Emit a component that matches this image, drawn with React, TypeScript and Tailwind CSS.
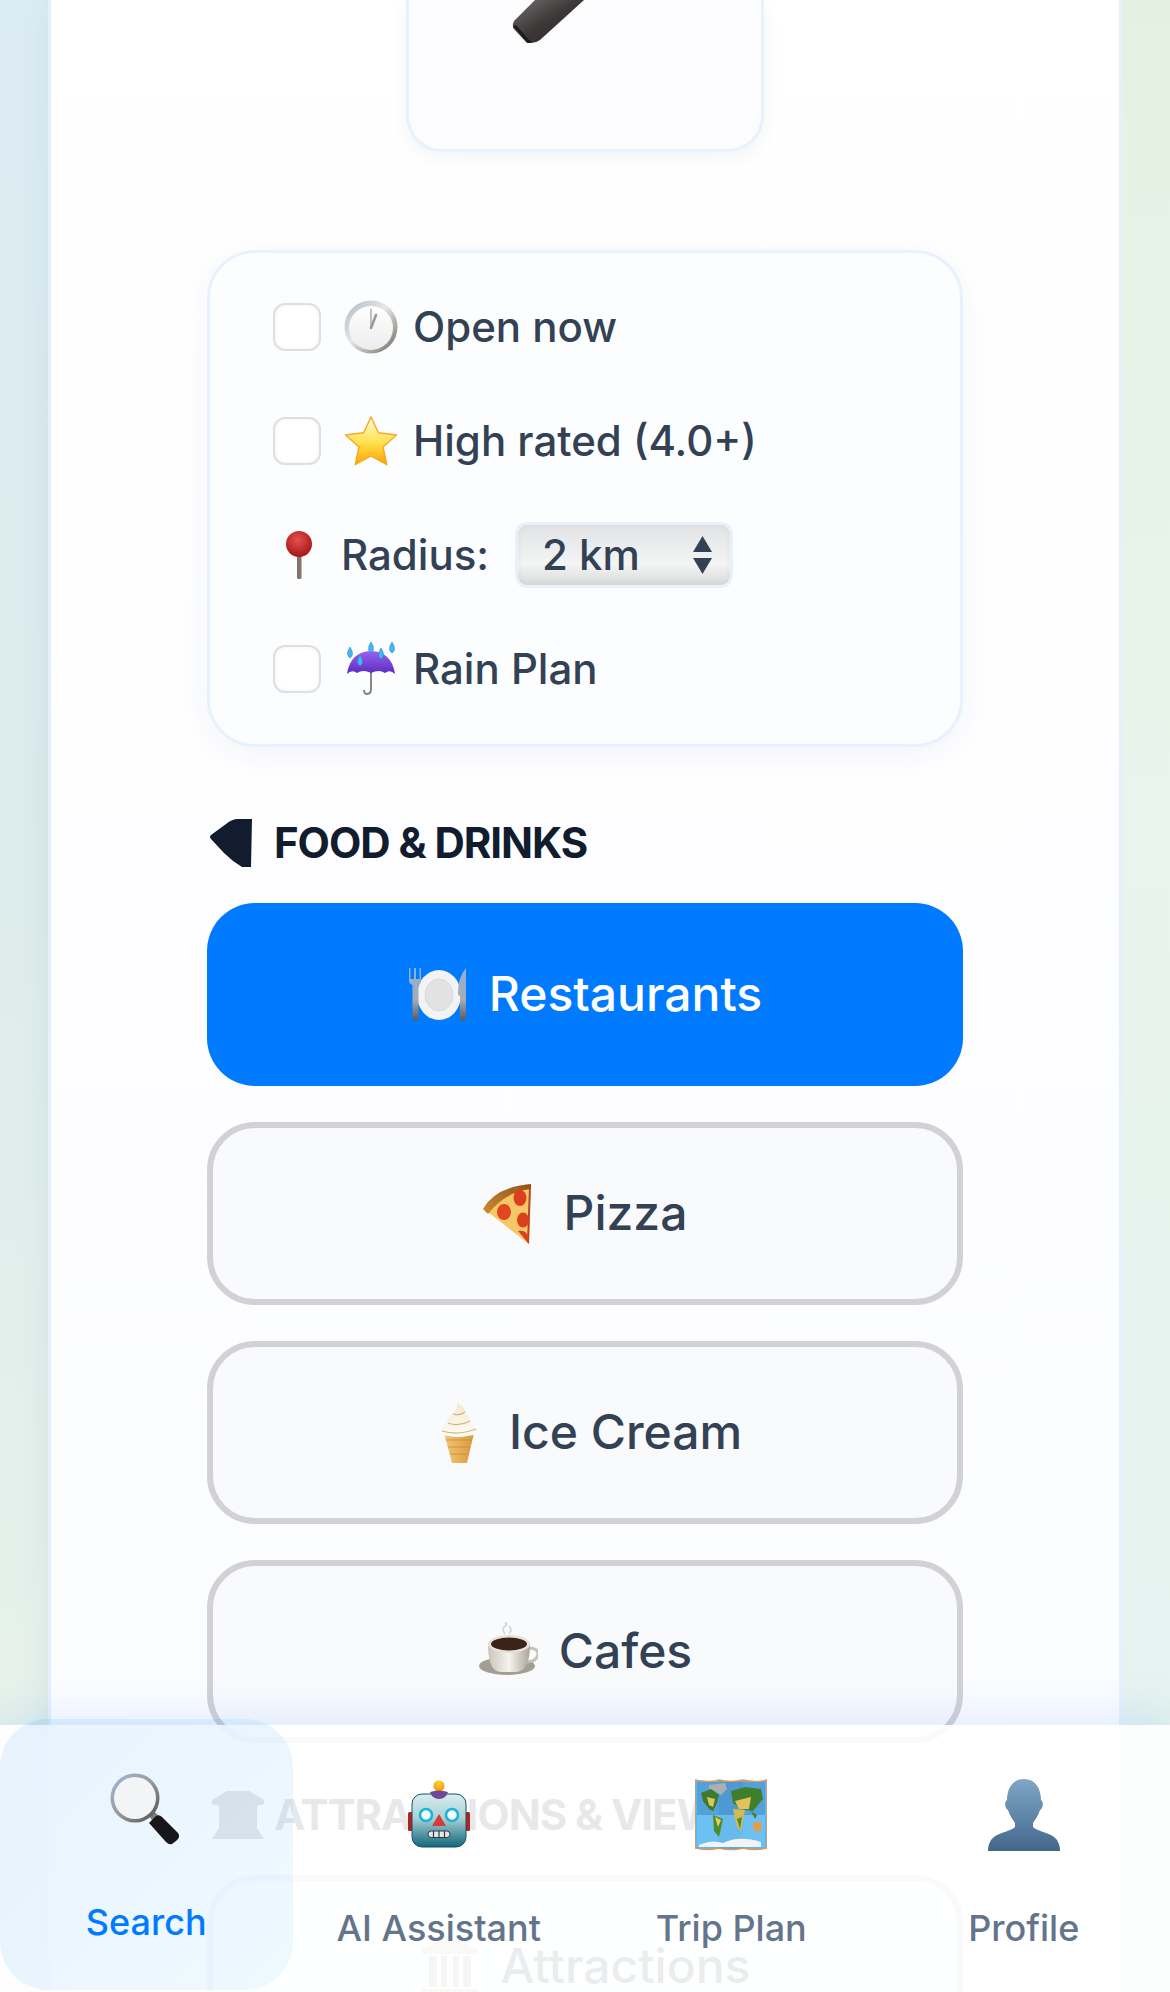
import type { ReactNode } from "react";

const ClockEmoji = () => (
  <svg viewBox="0 0 54 54" className="w-[54px] h-[54px] shrink-0">
    <defs>
      <linearGradient id="clockRing" x1="0" y1="0" x2="1" y2="1">
        <stop offset="0" stopColor="#a9b7c6" />
        <stop offset="0.45" stopColor="#e8e8e8" />
        <stop offset="0.7" stopColor="#b0aca6" />
        <stop offset="1" stopColor="#66625c" />
      </linearGradient>
      <linearGradient id="clockFace" x1="0" y1="0" x2="0" y2="1">
        <stop offset="0" stopColor="#ffffff" />
        <stop offset="1" stopColor="#ececec" />
      </linearGradient>
    </defs>
    <circle cx="27" cy="27" r="26.5" fill="url(#clockRing)" />
    <circle cx="27" cy="28" r="22" fill="url(#clockFace)" />
    <path d="M27 27V9" stroke="#9a9a9a" strokeWidth="1.2" strokeLinecap="round" />
    <path d="M27 28L32 15" stroke="#9a9a9a" strokeWidth="2.6" strokeLinecap="round" />
  </svg>
);

const StarEmoji = () => (
  <svg viewBox="0 0 54 54" className="w-[54px] h-[54px] shrink-0">
    <defs>
      <linearGradient id="starFill" x1="0" y1="0" x2="0" y2="1">
        <stop offset="0" stopColor="#fffbd8" />
        <stop offset="0.55" stopColor="#ffe04a" />
        <stop offset="1" stopColor="#ffa300" />
      </linearGradient>
    </defs>
    <path
      d="M27 3L34.4 18.8L52.5 21L39 33L42.8 50.6L27 42L11.2 50.6L15 33L1.5 21L19.6 18.8Z"
      fill="url(#starFill)"
      stroke="#f7a823"
      strokeWidth="1.4"
      strokeLinejoin="round"
    />
  </svg>
);

const PinEmoji = () => (
  <svg viewBox="0 0 28 48" className="w-[28px] h-[48px] shrink-0">
    <defs>
      <radialGradient id="pinHead" cx="0.45" cy="0.35" r="0.7">
        <stop offset="0" stopColor="#e84f4f" />
        <stop offset="1" stopColor="#9f1212" />
      </radialGradient>
    </defs>
    <rect x="12" y="22" width="4.5" height="26" rx="1.5" fill="#85746c" />
    <circle cx="14" cy="13" r="13" fill="url(#pinHead)" />
  </svg>
);

const UmbrellaEmoji = () => (
  <svg viewBox="0 0 54 54" className="w-[54px] h-[54px] shrink-0">
    <defs>
      <linearGradient id="umbrellaTop" x1="0" y1="0" x2="0" y2="1">
        <stop offset="0" stopColor="#9a62ee" />
        <stop offset="1" stopColor="#5a2bc0" />
      </linearGradient>
    </defs>
    <path d="M27 28V47Q27 52 23 52Q20 52 20 48" fill="none" stroke="#7c7c7c" strokeWidth="1.8" />
    <path d="M3 32Q6 10 27 9Q48 10 51 32Q46 27 41 31Q35 27 27 31Q19 27 13 31Q8 27 3 32Z" fill="url(#umbrellaTop)" />
    <path
      d="M6 5Q11 13 6 16Q1 13 6 5ZM27 0Q32 8 27 11Q22 8 27 0ZM48 0Q53 8 48 11Q43 8 48 0ZM37 6Q42 14 37 17Q32 14 37 6ZM16 13Q21 21 16 24Q11 21 16 13Z"
      fill="#45b6f2"
      stroke="#1f8fd0"
      strokeWidth="0.6"
    />
  </svg>
);

const PlateEmoji = () => (
  <svg viewBox="0 0 60 60" className="w-[60px] h-[60px] shrink-0">
    <defs>
      <linearGradient id="plateMetal" x1="0" y1="0" x2="0" y2="1">
        <stop offset="0" stopColor="#8fb0d6" />
        <stop offset="0.6" stopColor="#a3adb6" />
        <stop offset="1" stopColor="#55595c" />
      </linearGradient>
    </defs>
    <ellipse cx="31" cy="30" rx="22" ry="25" fill="#f3f3f3" />
    <ellipse cx="31" cy="30" rx="14" ry="16" fill="#e2e2e2" stroke="#cfdce8" />
    <path d="M1 3V15Q1 19 4.5 20V52Q4.5 56 7 56Q10.5 56 10.5 52V20Q13 19 13 15V3H11.5V14H8V3H6V14H2.5V3Z" fill="url(#plateMetal)" />
    <path d="M58 3Q50 12 50 28Q50 31 52 31V52Q52 56 54.5 56Q58 56 58 52Z" fill="url(#plateMetal)" />
  </svg>
);

const PizzaEmoji = () => (
  <svg viewBox="0 0 60 60" className="w-[60px] h-[60px] shrink-0">
    <defs>
      <linearGradient id="pizzaCrust" x1="0" y1="1" x2="1" y2="0">
        <stop offset="0" stopColor="#d08a2e" />
        <stop offset="1" stopColor="#94521a" />
      </linearGradient>
    </defs>
    <path d="M1 25Q12 5 48 0L46 60Z" fill="#f6c766" />
    <path d="M0 25Q12 3 48 0V5Q22 8 5 30Z" fill="url(#pizzaCrust)" />
    <path d="M46 3L48 0L46 60L44 58Z" fill="#b8442a" />
    <ellipse cx="37" cy="14" rx="6.5" ry="8" fill="#dd3f1e" />
    <ellipse cx="21" cy="28" rx="7" ry="8" fill="#e2461e" />
    <ellipse cx="40" cy="36" rx="6" ry="7.5" fill="#dd3f1e" />
    <path d="M35 47Q43 46 45 52L45 59Z" fill="#dd3f1e" />
  </svg>
);

const IceCreamEmoji = () => (
  <svg viewBox="0 0 60 60" className="w-[60px] h-[60px] shrink-0">
    <defs>
      <linearGradient id="coneFill" x1="0" y1="0" x2="1" y2="0">
        <stop offset="0" stopColor="#f3c772" />
        <stop offset="1" stopColor="#d89a3c" />
      </linearGradient>
      <linearGradient id="creamFill" x1="0" y1="0" x2="0" y2="1">
        <stop offset="0" stopColor="#f1e8cf" />
        <stop offset="1" stopColor="#fffdf6" />
      </linearGradient>
    </defs>
    <path d="M16 30H46L39 60H24Z" fill="url(#coneFill)" />
    <path d="M18 37H44M20 44H42M22 51H40" stroke="#c48f3d" strokeWidth="0.8" />
    <path d="M29 0Q37 3 38 11Q43 15 42 20Q47 23 49 27Q50 32 40 33Q30 35 20 33Q12 32 13 27Q14 22 19 20Q19 14 24 11Q30 7 29 0Z" fill="url(#creamFill)" />
    <path d="M20 20Q31 24 42 18M14 28Q30 33 48 26M25 11Q32 13 37 9" fill="none" stroke="#c9b682" strokeWidth="1.3" />
  </svg>
);

const CoffeeEmoji = () => (
  <svg viewBox="0 0 60 60" className="w-[60px] h-[60px] shrink-0">
    <defs>
      <linearGradient id="cupFill" x1="0" y1="0" x2="1" y2="0">
        <stop offset="0" stopColor="#c9c5bc" />
        <stop offset="0.5" stopColor="#f5f3ee" />
        <stop offset="1" stopColor="#a9a59c" />
      </linearGradient>
    </defs>
    <ellipse cx="29" cy="44" rx="28" ry="9" fill="#a39e93" />
    <path d="M50 26Q61 26 60 33Q58 40 48 40" fill="none" stroke="#c6c2b8" strokeWidth="3" />
    <path d="M10 22Q10 50 23 50H38Q52 50 52 22Z" fill="url(#cupFill)" />
    <ellipse cx="31" cy="22" rx="21" ry="9" fill="#e4e1da" />
    <ellipse cx="31" cy="22" rx="18" ry="6.5" fill="#3a2319" />
    <path d="M27 12Q23 7 27 4Q30 2 27 0M31 12Q35 8 31 4" fill="none" stroke="#d3d3d3" strokeWidth="1.6" />
  </svg>
);

const TempleEmoji = () => (
  <svg viewBox="0 0 60 60" className="w-[60px] h-[60px] shrink-0">
    <path d="M30 0L58 12V17H2V12Z" fill="#c4bfb1" />
    <path d="M9 19H17V50H9ZM21 19H27V50H21ZM33 19H39V50H33ZM43 19H51V50H43Z" fill="#aaa496" />
    <path d="M2 52H58V60H2Z" fill="#c4bfb1" />
  </svg>
);

const MicHandle = () => (
  <svg viewBox="0 0 75 44" className="w-[75px] h-[44px]">
    <defs>
      <linearGradient id="micBody" x1="0" y1="0" x2="1" y2="1">
        <stop offset="0" stopColor="#707070" />
        <stop offset="0.5" stopColor="#3c3636" />
        <stop offset="1" stopColor="#2a2a2a" />
      </linearGradient>
    </defs>
    <path d="M25 0L4 21Q2 24 3 28L17 43H21Q26 43 30 40L74 0Z" fill="url(#micBody)" />
    <path d="M3 26L17 42Q20 44 22 42L19 40L6 25Z" fill="#1a1a1a" />
  </svg>
);

const ForkShape = () => (
  <svg viewBox="0 0 42 48" className="w-[42px] h-[48px] shrink-0 text-[#111c2e]">
    <path d="M42 0H28Q22 0 16 5L1 16Q-1 18 1 20L14 34Q22 42 32 48H41Z" fill="currentColor" />
  </svg>
);

const TempleShape = () => (
  <svg viewBox="0 0 52 48" className="w-[52px] h-[48px] shrink-0 ml-[2px] -mr-[12px] text-[#111c2e]">
    <path d="M15 0H37L52 9V13L45 15V37L52 48H0L7 37V15L0 13V9Z" fill="currentColor" />
  </svg>
);

const SearchEmoji = () => (
  <svg viewBox="0 0 72 72" className="w-[72px] h-[72px]">
    <defs>
      <linearGradient id="lensRim" x1="0" y1="0" x2="1" y2="1">
        <stop offset="0" stopColor="#9fb9dc" />
        <stop offset="0.5" stopColor="#9a9a9a" />
        <stop offset="1" stopColor="#4a4a4a" />
      </linearGradient>
    </defs>
    <path d="M38 41L42 37L49 43L43 49Z" fill="#7d7d7d" />
    <path d="M39 50L46 43Q49 41 52 44L68 60Q71 64 66 68L62 71Q59 72 56 69Z" fill="#17171b" />
    <circle cx="25" cy="25" r="24.5" fill="url(#lensRim)" />
    <circle cx="25" cy="25" r="21" fill="#f3f4f6" />
  </svg>
);

const RobotEmoji = () => (
  <svg viewBox="0 0 72 72" className="w-[72px] h-[72px]">
    <defs>
      <linearGradient id="robotHead" x1="0" y1="0" x2="0" y2="1">
        <stop offset="0" stopColor="#d9ecee" />
        <stop offset="0.45" stopColor="#a9d2d6" />
        <stop offset="1" stopColor="#13667a" />
      </linearGradient>
      <radialGradient id="robotBall" cx="0.5" cy="0.3" r="0.7">
        <stop offset="0" stopColor="#ffd83a" />
        <stop offset="1" stopColor="#ff8c00" />
      </radialGradient>
    </defs>
    <rect x="5" y="33" width="5" height="19" rx="1.5" fill="#b3201f" />
    <rect x="62" y="33" width="5" height="19" rx="1.5" fill="#b3201f" />
    <circle cx="36" cy="7" r="5.5" fill="url(#robotBall)" />
    <rect x="9" y="15" width="54" height="53" rx="10" fill="url(#robotHead)" stroke="#0f5468" strokeWidth="1" />
    <path d="M27 13Q36 10 45 13Q43 20 36 20Q29 20 27 13Z" fill="#6a4a94" />
    <circle cx="23" cy="36" r="6" fill="#f2fbfc" stroke="#1ab4d8" strokeWidth="2.6" />
    <circle cx="49" cy="36" r="6" fill="#f2fbfc" stroke="#1ab4d8" strokeWidth="2.6" />
    <path d="M36 35L43 47H29Z" fill="#d63a3a" />
    <rect x="25" y="52" width="22" height="6.5" rx="3.2" fill="#e6e6e6" stroke="#2b3b44" />
    <path d="M30.5 52V58.5M36 52V58.5M41.5 52V58.5" stroke="#2b3b44" strokeWidth="1.2" />
  </svg>
);

const MapEmoji = () => (
  <svg viewBox="0 0 72 72" className="w-[72px] h-[72px]">
    <path d="M0 1Q18 4 24 1Q36 4 48 1Q60 4 72 1V69Q60 72 48 69Q36 72 24 69Q12 72 0 69Z" fill="#5db6ee" stroke="#d99a62" strokeWidth="1.5" />
    <path d="M24 2Q36 4 48 2V69Q36 71 24 69Z" fill="#4f9ed6" opacity="0.5" />
    <path d="M2 3H70V36H2Z" fill="#3f7fb0" opacity="0.35" />
    <path d="M2 36H70V68H2Z" fill="#7ccaf6" opacity="0.5" />
    <path d="M14 6L30 4L32 10L26 16L20 12L14 10Z" fill="#aab0b2" />
    <path d="M6 14L16 10L24 16L22 24L18 32L14 30L8 22Z" fill="#3f7a2c" />
    <path d="M12 18L20 20L18 28L14 26Z" fill="#dcc65c" />
    <path d="M18 36L28 40L24 58L19 52Z" fill="#4d8c2c" />
    <path d="M20 38L26 41L23 48Z" fill="#e6cf62" />
    <path d="M36 12L50 8L66 10L68 20L58 32L46 30L38 24Z" fill="#3f7f2c" />
    <path d="M40 22L56 18L54 30L44 30Z" fill="#e1c35a" />
    <path d="M38 30L50 31L46 52L42 48Z" fill="#d3bb50" />
    <path d="M42 40L47 38L45 50Z" fill="#4d8c2c" />
    <path d="M56 32L62 36L60 40Z" fill="#3f7f2c" />
    <path d="M58 44L66 43L66 52L59 52Z" fill="#ec9a3a" />
    <path d="M4 66Q16 60 28 64Q44 56 66 63V68H4Z" fill="#f0f4f6" />
  </svg>
);

const PersonEmoji = () => (
  <svg viewBox="0 0 72 72" className="w-[72px] h-[72px]">
    <defs>
      <linearGradient id="personFill" x1="0" y1="0" x2="0" y2="1">
        <stop offset="0" stopColor="#7fa7c6" />
        <stop offset="1" stopColor="#44668c" />
      </linearGradient>
    </defs>
    <path
      d="M36 0C47 0 53 9 53 21C56 23 55 30 52 31C50 37 47 41 45 44V48C48 52 60 53 66 58C70 61 72 66 72 72H0C0 66 2 61 6 58C12 53 24 52 27 48V44C25 41 22 37 20 31C17 30 16 23 19 21C19 9 25 0 36 0Z"
      fill="url(#personFill)"
    />
  </svg>
);

const Checkbox = () => (
  <span className="w-[48px] h-[48px] shrink-0 rounded-[12px] border-[2px] border-[#dedfe1] bg-white shadow-[inset_0_0_4px_rgba(0,0,0,0.06)]" />
);

const FilterRow = ({ icon, label }: { icon: ReactNode; label: string }) => (
  <div className="flex items-center h-[66px]">
    <Checkbox />
    <span className="ml-[23px] mr-[15px]">{icon}</span>
    <span className="pb-[2px]">{label}</span>
  </div>
);

const RadiusSelect = () => (
  <div className="flex items-center justify-between w-[218px] h-[66px] ml-[26px] pl-[24px] pr-[18px] rounded-[12px] border-[3px] border-[#e8f2fe] bg-[linear-gradient(to_bottom,#e2e3e5,#f3f4f4_65%,#d9dada)] shadow-[inset_0_0_6px_rgba(0,0,0,0.06)]">
    <span className="pb-[2px]">2 km</span>
    <svg viewBox="0 0 19 38" className="w-[19px] h-[38px]">
      <path d="M9.5 0L19 16H0Z" fill="#334155" />
      <path d="M9.5 38L0 22H19Z" fill="#334155" />
    </svg>
  </div>
);

const CategoryHeading = ({ icon, label }: { icon: ReactNode; label: string }) => (
  <div className="flex items-center gap-[22px] h-[48px] mb-[36px] pl-[3px] text-[42px] font-bold tracking-[-0.025em] text-[#111c2e]">
    {icon}
    <span className="pb-[2px]">{label}</span>
  </div>
);

const CategoryButton = ({ icon, label, active }: { icon: ReactNode; label: string; active?: boolean }) => (
  <button
    className={
      active
        ? "flex items-center justify-center gap-[21px] w-full h-[183px] shrink-0 rounded-[48px] bg-[#007aff] text-[48px] font-medium text-white"
        : "flex items-center justify-center gap-[21px] w-full h-[183px] shrink-0 rounded-[48px] border-[6px] border-[#d1d1d6] bg-[#f9fafc] text-[48px] font-medium text-[#334155]"
    }
  >
    {icon}
    <span className="pb-[2px]">{label}</span>
  </button>
);

const NavTab = ({ icon, label, active }: { icon: ReactNode; label: string; active?: boolean }) => (
  <div
    className={
      active
        ? "flex flex-col items-center h-[271px] pt-[54px] -translate-y-[6px] rounded-[48px] bg-[linear-gradient(135deg,rgba(0,122,255,0.09),rgba(0,170,255,0.065))] text-[#007aff]"
        : "flex flex-col items-center h-[267px] pt-[54px] text-[#64748b]"
    }
  >
    <div className="flex items-center justify-center h-[72px]">{icon}</div>
    <span className="mt-[55px] text-[36px] leading-[44px] font-medium">{label}</span>
  </div>
);

export default function App() {
  return (
    <div className="relative flex h-[1992px] w-[1170px] overflow-hidden font-[Inter,sans-serif]">
      <div className="w-[48px] shrink-0 bg-[linear-gradient(to_bottom,#dcecf3,#dcebec_40%,#e9f4ea)]" />

      <main className="flex flex-col items-center w-[1074px] shrink-0 border-x-[3px] border-[#e6f0fd] bg-[linear-gradient(to_bottom,#ffffff,#fbfcff)] shadow-[0_0_30px_rgba(0,80,140,0.07)]">
        <div className="flex flex-col w-[358px] h-[152px] shrink-0 rounded-b-[36px] border-x-[3px] border-b-[3px] border-[#e8f2fe] bg-[#fcfcff] shadow-[0_6px_18px_rgba(0,60,120,0.05)]">
          <div className="ml-[101px] h-[44px]">
            <MicHandle />
          </div>
        </div>

        <div className="flex flex-col gap-[48px] w-[756px] h-[497px] shrink-0 mt-[98px] pt-[41px] pl-[63px] rounded-[48px] border-[3px] border-[#e8f2fe] bg-[#fcfdfe] text-[42px] font-medium text-[#334155] shadow-[0_6px_30px_rgba(0,60,120,0.05)]">
          <FilterRow icon={<ClockEmoji />} label="Open now" />
          <FilterRow icon={<StarEmoji />} label="High rated (4.0+)" />
          <div className="flex items-center h-[66px]">
            <span className="ml-[12px] mr-[28px]">
              <PinEmoji />
            </span>
            <span className="pb-[2px]">Radius:</span>
            <RadiusSelect />
          </div>
          <FilterRow icon={<UmbrellaEmoji />} label="Rain Plan" />
        </div>

        <section className="w-[756px] shrink-0 mt-[72px]">
          <CategoryHeading icon={<ForkShape />} label="FOOD & DRINKS" />
          <div className="flex flex-col gap-[36px]">
            <CategoryButton icon={<PlateEmoji />} label="Restaurants" active />
            <CategoryButton icon={<PizzaEmoji />} label="Pizza" />
            <CategoryButton icon={<IceCreamEmoji />} label="Ice Cream" />
            <CategoryButton icon={<CoffeeEmoji />} label="Cafes" />
          </div>
        </section>

        <section className="w-[756px] shrink-0 mt-[48px]">
          <CategoryHeading icon={<TempleShape />} label="ATTRACTIONS & VIEWS" />
          <CategoryButton icon={<TempleEmoji />} label="Attractions" />
        </section>
      </main>

      <div className="w-[48px] shrink-0 bg-[linear-gradient(to_bottom,#e4f1e2,#e9f4ec_40%,#e4f2f1)]" />

      <nav className="absolute left-0 right-0 bottom-0 grid grid-cols-4 h-[267px] bg-white/90 shadow-[0_-12px_36px_rgba(0,122,255,0.1)]">
        <NavTab icon={<SearchEmoji />} label="Search" active />
        <NavTab icon={<RobotEmoji />} label="AI Assistant" />
        <NavTab icon={<MapEmoji />} label="Trip Plan" />
        <NavTab icon={<PersonEmoji />} label="Profile" />
      </nav>
    </div>
  );
}
